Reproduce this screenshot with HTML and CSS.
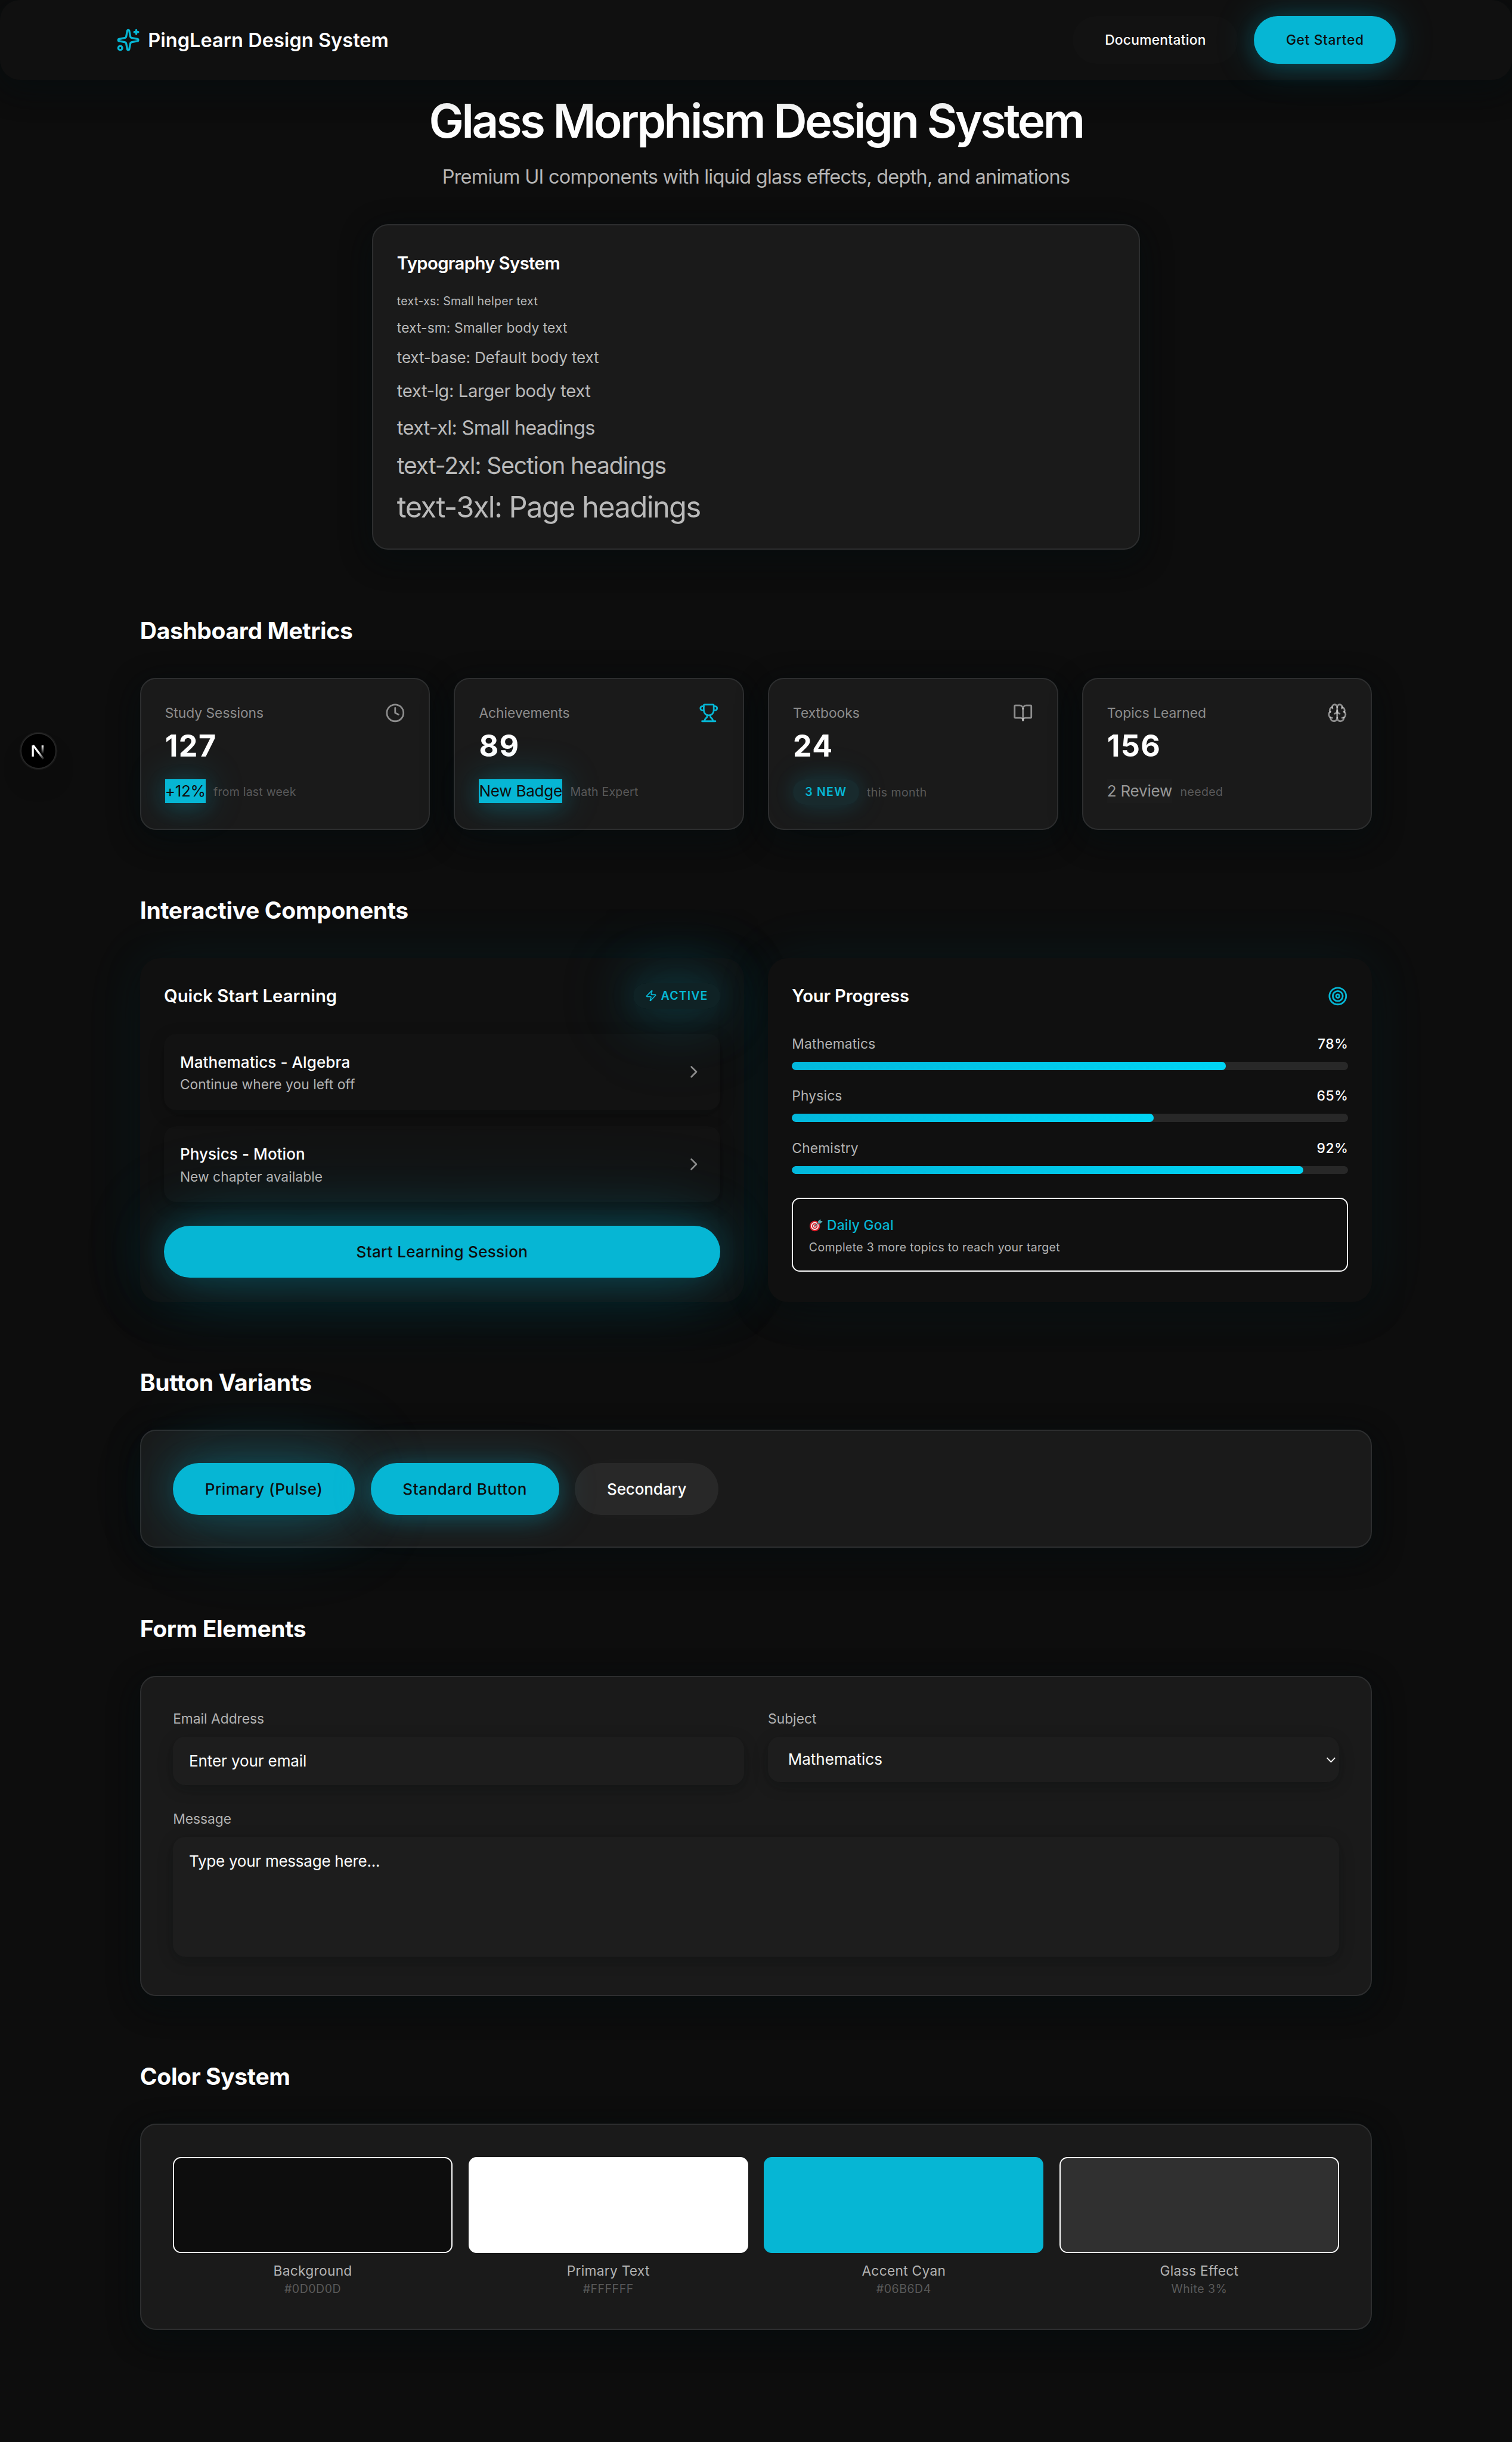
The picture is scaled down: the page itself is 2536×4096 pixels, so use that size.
FILE: index.html
```
<!DOCTYPE html>
<html lang="en">
<head>
<meta charset="utf-8">
<title>PingLearn Design System</title>
<link rel="stylesheet" href="styles.css">
</head>
<body>
<header class="topbar">
  <div class="topbar-inner">
    <div class="brand">
      <svg class="icon icon-lg" viewBox="0 0 24 24"><path d="M11.017 2.814a1 1 0 0 1 1.966 0l1.051 5.558a2 2 0 0 0 1.594 1.594l5.558 1.051a1 1 0 0 1 0 1.966l-5.558 1.051a2 2 0 0 0-1.594 1.594l-1.051 5.558a1 1 0 0 1-1.966 0l-1.051-5.558a2 2 0 0 0-1.594-1.594l-5.558-1.051a1 1 0 0 1 0-1.966l5.558-1.051a2 2 0 0 0 1.594-1.594z"/><path d="M20 2v4"/><path d="M22 4h-4"/><circle cx="4" cy="20" r="2"/></svg>
      <span>PingLearn Design System</span>
    </div>
    <nav class="actions">
      <button class="btn btn-sm btn-ghost">Documentation</button>
      <button class="btn btn-sm btn-primary btn-cta">Get Started</button>
    </nav>
  </div>
</header>

<main class="page">
  <section class="hero">
    <h1>Glass Morphism Design System</h1>
    <p class="lead">Premium UI components with liquid glass effects, depth, and animations</p>
    <div class="card type-card">
      <h2 class="type-title">Typography System</h2>
      <div class="type-list">
        <p class="t-xs">text-xs: Small helper text</p>
        <p class="t-sm">text-sm: Smaller body text</p>
        <p class="t-base">text-base: Default body text</p>
        <p class="t-lg">text-lg: Larger body text</p>
        <p class="t-xl">text-xl: Small headings</p>
        <p class="t-2xl">text-2xl: Section headings</p>
        <p class="t-3xl">text-3xl: Page headings</p>
      </div>
    </div>
  </section>

  <section class="section">
    <h2 class="section-title">Dashboard Metrics</h2>
    <div class="metrics">
      <article class="card metric">
        <div class="metric-head"><span>Study Sessions</span>
          <svg class="icon" viewBox="0 0 24 24"><circle cx="12" cy="12" r="10"/><path d="M12 6v6l4 2"/></svg></div>
        <div class="metric-value">127</div>
        <div class="metric-foot"><span class="tag tag-cyan tag-tight">+12%</span><span class="note">from last week</span></div>
      </article>
      <article class="card metric">
        <div class="metric-head"><span>Achievements</span>
          <svg class="icon cyan" viewBox="0 0 24 24"><path d="M10 14.66v1.626a2 2 0 0 1-.976 1.696A5 5 0 0 0 7 21.978"/><path d="M14 14.66v1.626a2 2 0 0 0 .976 1.696A5 5 0 0 1 17 21.978"/><path d="M18 9h1.5a1 1 0 0 0 0-5H18"/><path d="M4 22h16"/><path d="M6 9a6 6 0 0 0 12 0V3a1 1 0 0 0-1-1H7a1 1 0 0 0-1 1z"/><path d="M6 9H4.5a1 1 0 0 1 0-5H6"/></svg></div>
        <div class="metric-value">89</div>
        <div class="metric-foot"><span class="tag tag-cyan">New Badge</span><span class="note">Math Expert</span></div>
      </article>
      <article class="card metric">
        <div class="metric-head"><span>Textbooks</span>
          <svg class="icon" viewBox="0 0 24 24"><path d="M12 7v14"/><path d="M3 18a1 1 0 0 1-1-1V4a1 1 0 0 1 1-1h5a4 4 0 0 1 4 4 4 4 0 0 1 4-4h5a1 1 0 0 1 1 1v13a1 1 0 0 1-1 1h-6a3 3 0 0 0-3 3 3 3 0 0 0-3-3z"/></svg></div>
        <div class="metric-value">24</div>
        <div class="metric-foot"><span class="pill">3 NEW</span><span class="note note-wide">this month</span></div>
      </article>
      <article class="card metric">
        <div class="metric-head"><span>Topics Learned</span>
          <svg class="icon" viewBox="0 0 24 24"><path d="M12 18V5"/><path d="M15 13a4.17 4.17 0 0 1-3-4 4.17 4.17 0 0 1-3 4"/><path d="M17.598 6.5A3 3 0 1 0 12 5a3 3 0 1 0-5.598 1.5"/><path d="M17.997 5.125a4 4 0 0 1 2.526 5.77"/><path d="M18 18a4 4 0 0 0 2-7.464"/><path d="M19.967 17.483A4 4 0 1 1 12 18a4 4 0 1 1-7.967-.517"/><path d="M6 18a4 4 0 0 1-2-7.464"/><path d="M6.003 5.125a4 4 0 0 0-2.526 5.77"/></svg></div>
        <div class="metric-value">156</div>
        <div class="metric-foot"><span class="tag tag-muted">2 Review</span><span class="note note-wide">needed</span></div>
      </article>
    </div>
  </section>

  <section class="section">
    <h2 class="section-title">Interactive Components</h2>
    <div class="duo">
      <article class="panel">
        <div class="panel-head"><h3>Quick Start Learning</h3>
          <span class="pill pill-live"><svg class="icon icon-xs" viewBox="0 0 24 24"><path d="M4 14a1 1 0 0 1-.78-1.63l9.9-10.2a.5.5 0 0 1 .86.46l-1.92 6.02A1 1 0 0 0 13 10h7a1 1 0 0 1 .78 1.63l-9.9 10.2a.5.5 0 0 1-.86-.46l1.92-6.02A1 1 0 0 0 11 14z"/></svg>ACTIVE</span></div>
        <div class="lessons">
          <a class="lesson"><span class="lesson-text"><b>Mathematics - Algebra</b><small>Continue where you left off</small></span>
            <svg class="icon" viewBox="0 0 24 24"><path d="m9 18 6-6-6-6"/></svg></a>
          <a class="lesson"><span class="lesson-text"><b>Physics - Motion</b><small>New chapter available</small></span>
            <svg class="icon" viewBox="0 0 24 24"><path d="m9 18 6-6-6-6"/></svg></a>
        </div>
        <button class="btn btn-primary btn-pulse btn-block">Start Learning Session</button>
      </article>
      <article class="panel">
        <div class="panel-head"><h3 class="snug">Your Progress</h3>
          <svg class="icon cyan" viewBox="0 0 24 24"><circle cx="12" cy="12" r="10"/><circle cx="12" cy="12" r="6"/><circle cx="12" cy="12" r="2"/></svg></div>
        <div class="progress-list">
          <div class="progress"><div class="progress-head"><span>Mathematics</span><b>78%</b></div><div class="track"><div class="fill" style="width:78%"></div></div></div>
          <div class="progress"><div class="progress-head"><span>Physics</span><b>65%</b></div><div class="track"><div class="fill" style="width:65%"></div></div></div>
          <div class="progress"><div class="progress-head"><span>Chemistry</span><b>92%</b></div><div class="track"><div class="fill" style="width:92%"></div></div></div>
        </div>
        <div class="goal">
          <div class="goal-title">
            <svg class="goal-icon" viewBox="0 0 28 28"><circle cx="11.5" cy="16" r="10.5" fill="#d3202a"/><circle cx="11.5" cy="16" r="7.8" fill="#f3ecec"/><circle cx="11.5" cy="16" r="5.6" fill="#d3202a"/><circle cx="11.5" cy="16" r="3.3" fill="#f3ecec"/><circle cx="11.5" cy="16" r="1.6" fill="#d3202a"/><path d="M11.5 16 21 8" stroke="#4b6a70" stroke-width="1.8"/><path d="M18 6.500 22.500 2l.7 3.800 4 .8-4.700 4.600-4.500-.7z" fill="#56a9b0"/></svg>
            <span>Daily Goal</span></div>
          <p>Complete 3 more topics to reach your target</p>
        </div>
      </article>
    </div>
  </section>

  <section class="section">
    <h2 class="section-title">Button Variants</h2>
    <div class="card roomy buttons">
      <button class="btn btn-primary btn-pulse">Primary (Pulse)</button>
      <button class="btn btn-primary btn-standard">Standard Button</button>
      <button class="btn btn-secondary">Secondary</button>
    </div>
  </section>

  <section class="section">
    <h2 class="section-title">Form Elements</h2>
    <form class="card roomy form">
      <label class="field"><span>Email Address</span><input class="control" type="text" placeholder="Enter your email"></label>
      <label class="field"><span>Subject</span>
        <span class="select-wrap"><select class="control"><option>Mathematics</option></select>
        <svg class="caret" viewBox="0 0 10 6"><path d="M1 .8 5 5 9 .8"/></svg></span></label>
      <label class="field wide"><span>Message</span><textarea class="control message" placeholder="Type your message here..."></textarea></label>
    </form>
  </section>

  <section class="section">
    <h2 class="section-title">Color System</h2>
    <div class="card roomy swatches">
      <div class="swatch"><div class="chip chip-bg"></div><p>Background</p><small>#0D0D0D</small></div>
      <div class="swatch"><div class="chip chip-white"></div><p>Primary Text</p><small>#FFFFFF</small></div>
      <div class="swatch"><div class="chip chip-cyan"></div><p>Accent Cyan</p><small>#06B6D4</small></div>
      <div class="swatch"><div class="chip chip-glass"></div><p>Glass Effect</p><small>White 3%</small></div>
    </div>
  </section>
</main>

<div class="dev-badge">
  <svg viewBox="0 0 34 34">
    <defs>
      <linearGradient id="diag" gradientUnits="userSpaceOnUse" x1="17" y1="18.500" x2="22.500" y2="26"><stop offset="0" stop-color="#fff"/><stop offset="1" stop-color="#fff" stop-opacity="0"/></linearGradient>
      <linearGradient id="stem" gradientUnits="userSpaceOnUse" x1="0" y1="11.500" x2="0" y2="20"><stop offset="0" stop-color="#fff"/><stop offset="1" stop-color="#fff" stop-opacity="0"/></linearGradient>
    </defs>
    <path d="M11.400 22.700V11.500" stroke="#fff" stroke-width="2"/>
    <path d="M11.700 11.500 22 25" stroke="url(#diag)" stroke-width="2"/>
    <rect x="20.100" y="11.500" width="2" height="8.500" fill="url(#stem)"/>
  </svg>
</div>
</body>
</html>
```
FILE: styles.css
```
/* 1rem is ten layout pixels at the display scale */
html { font-size: 16.7725px; background: #0d0d0d; }
* { box-sizing: border-box; margin: 0; padding: 0; }
body {
  position: relative;
  height: 244.2rem;
  overflow: hidden;
  background: #0d0d0d;
  color: #fff;
  font-family: Inter, "Liberation Sans", sans-serif;
  font-size: 1.552rem;
  line-height: 2.4rem;
}
button, input, select, textarea { font: inherit; color: inherit; border: 0; background: none; letter-spacing: inherit; }

.icon { width: 2rem; height: 2rem; flex: none; fill: none; stroke: currentColor; stroke-width: 2; stroke-linecap: round; stroke-linejoin: round; }
.icon-lg { width: 2.4rem; height: 2.4rem; color: #06b6d4; }
.icon-xs { width: 1.2rem; height: 1.2rem; }
.cyan { color: #06b6d4 !important; }

/* top bar */
.topbar {
  position: relative;
  z-index: 2;
  height: 8rem;
  border-radius: 2rem;
  background: #101010;
  box-shadow: 0 .8rem 3.2rem rgba(0,0,0,.46), 0 .8rem 3.2rem rgba(6,182,212,.05);
}
.topbar-inner { width: 128rem; height: 100%; margin: 0 auto; display: flex; align-items: center; justify-content: space-between; }
.brand { display: flex; align-items: center; gap: .8rem; font-size: 1.94rem; font-weight: 600; letter-spacing: .001em; }
.actions { display: flex; gap: 1.6rem; }

/* buttons */
.btn { height: 5.2rem; padding: 1px 3.2rem 0; border-radius: 2.6rem; font-weight: 500; white-space: nowrap; letter-spacing: .016em; }
.btn-sm { height: 4.8rem; border-radius: 2.4rem; font-size: 1.358rem; letter-spacing: .012em; }
.btn-primary { background: #06b6d4; color: #0d0d0d; box-shadow: 0 .4rem 2rem rgba(6,182,212,.2), 0 0 4rem rgba(6,182,212,.26); }
.btn-cta { letter-spacing: .028em; }
.btn-standard { letter-spacing: .0205em; }
.btn-pulse { box-shadow: 0 0 3rem rgba(6,182,212,.16), 0 0 6rem rgba(6,182,212,.22), 0 0 10rem rgba(6,182,212,.2); }
.btn-ghost { background: rgba(255,255,255,.012); box-shadow: 0 0 3.2rem rgba(255,255,255,.014); }
.btn-secondary { background: rgba(255,255,255,.064); box-shadow: 0 0 3.2rem rgba(255,255,255,.02); letter-spacing: -.0057em; }
.btn-block { display: block; width: 100%; letter-spacing: .011em; }

/* hero */
.page { width: 123.2rem; margin: 0 auto; }
.hero { padding-top: 1.2rem; text-align: center; }
h1 { font-size: 4.656rem; line-height: 5.8rem; font-weight: 600; letter-spacing: -.045em; }
.lead { margin-top: 1.3rem; font-size: 1.94rem; line-height: 2.8rem; letter-spacing: -.0234em; color: #b5b5b5; }

.card {
  border: 2px solid #2d2e2f;
  border-radius: 1.6rem;
  background: #1a1a1a;
  box-shadow: 0 .8rem 3.2rem rgba(0,0,0,.46), 0 .8rem 3.2rem rgba(6,182,212,.05);
}
.roomy { padding: calc(3.3rem - 2px); }
.type-card { width: 76.8rem; height: 32.6rem; margin: 3.3rem auto 0; padding: calc(2.5rem - 1px) calc(2.5rem - 2px) 0; text-align: left; }
.type-title { font-size: 1.746rem; line-height: 2.8rem; font-weight: 600; letter-spacing: -.021em; }
.type-list { margin-top: 1.6rem; display: flex; flex-direction: column; gap: .8rem; color: #bababa; }
.t-xs { font-size: 1.164rem; line-height: 1.6rem; letter-spacing: .015em; }
.t-sm { font-size: 1.358rem; line-height: 2rem; letter-spacing: .0045em; }
.t-base { font-size: 1.552rem; line-height: 2.4rem; letter-spacing: -.0065em; }
.t-lg { font-size: 1.746rem; line-height: 2.8rem; letter-spacing: -.013em; }
.t-xl { font-size: 1.94rem; line-height: 2.8rem; letter-spacing: -.0225em; }
.t-2xl { font-size: 2.328rem; line-height: 3.2rem; letter-spacing: -.029em; }
.t-3xl { font-size: 2.91rem; line-height: 3.6rem; letter-spacing: -.033em; }

.section { padding-top: calc(6.4rem + 1px); }
.section-title { margin-bottom: calc(3.2rem - 1px); font-size: 2.328rem; line-height: 3.2rem; font-weight: 700; letter-spacing: -.0095em; }

/* metrics */
.metrics { display: grid; grid-template-columns: repeat(4, 1fr); gap: 2.4rem; }
.metric { height: 15.2rem; padding: calc(2.5rem - 2px); }
.metric-head { display: flex; justify-content: space-between; font-size: 1.358rem; line-height: 2rem; color: rgba(255,255,255,.5); }
.metric-value { margin-top: .5rem; font-size: 3rem; line-height: 3.6rem; font-weight: 700; letter-spacing: .028em; }
.metric-foot { display: flex; align-items: center; gap: .8rem; margin-top: 1.5rem; }
.tag { letter-spacing: -.0085em; }
.tag-cyan { background: #06b6d4; color: #0d0d0d; box-shadow: 0 .4rem 2rem rgba(6,182,212,.2), 0 0 4rem rgba(6,182,212,.28); }
.tag-tight { letter-spacing: -.012em; }
.tag-muted { background: rgba(255,255,255,.012); color: #989898; }
.note { padding-top: 1px; font-size: 1.164rem; letter-spacing: .011em; color: #595959; }
.note-wide { letter-spacing: .021em; }
.pill {
  display: flex; align-items: center; gap: .4rem;
  height: 2.6rem; padding: 0 1.2rem; border-radius: 1.3rem;
  background: rgba(6,182,212,.1); color: #06b6d4;
  box-shadow: 0 0 2rem rgba(6,182,212,.15), 0 0 4rem rgba(6,182,212,.1);
  font-size: 1.164rem; font-weight: 600; letter-spacing: .065em;
}
.pill-live { background: rgba(6,182,212,.11); letter-spacing: .058em; box-shadow: 0 0 3rem rgba(6,182,212,.1), 0 0 6rem rgba(6,182,212,.28), 0 0 9rem rgba(6,182,212,.26); }

/* panels */
.duo { display: grid; grid-template-columns: 1fr 1fr; gap: 2.4rem; }
.panel {
  height: 34.4rem; padding: 2.4rem; border-radius: 2rem; background: #101010;
  box-shadow: 0 .8rem 3.2rem rgba(0,0,0,.38), 0 0 6rem rgba(6,182,212,.09);
}
.panel-head { height: 2.8rem; display: flex; align-items: center; justify-content: space-between; }
h3 { padding-top: 1px; font-size: 1.746rem; line-height: 2.8rem; font-weight: 600; }
.snug { letter-spacing: -.007em; }
.lessons { display: flex; flex-direction: column; gap: 1.6rem; margin: 2.4rem 0; }
.lesson {
  display: flex; align-items: center; justify-content: space-between;
  height: 7.6rem; padding: 1.6rem; border-radius: 1.2rem;
  background: rgba(255,255,255,.012); color: #8c8c8c;
  box-shadow: 0 .4rem 1.6rem rgba(0,0,0,.18), 0 .4rem 1.6rem rgba(6,182,212,.012);
}
.lesson-text { display: flex; flex-direction: column; padding-top: 2px; }
.lesson b { font-weight: 500; color: #fff; letter-spacing: .003em; }
.lesson small { font-size: 1.358rem; line-height: 2rem; color: #b3b3b3; letter-spacing: .002em; }
.progress-list { display: flex; flex-direction: column; gap: 1.6rem; margin: 2.4rem 0; }
.progress-head { display: flex; justify-content: space-between; font-size: 1.358rem; line-height: 2rem; letter-spacing: .007em; color: #b3b3b3; }
.progress-head b { font-weight: 500; color: #fff; letter-spacing: .03em; margin-right: -.03em; }
.track { height: .8rem; margin-top: .8rem; border-radius: .4rem; background: #282828; overflow: hidden; }
.fill { height: 100%; border-radius: .4rem; background: linear-gradient(135deg, #02b8dc, #00d5f5); }
.goal { height: 7.4rem; padding: calc(1.7rem - 2px); border: 2px solid #fff; border-radius: .8rem; }
.goal-title { display: flex; align-items: center; gap: .4rem; font-size: 1.358rem; line-height: 2rem; font-weight: 500; letter-spacing: .009em; color: #06b6d4; }
.goal-icon { width: 1.4rem; height: 1.4rem; }
.goal p { margin-top: calc(.4rem + 1px); font-size: 1.164rem; line-height: 1.6rem; letter-spacing: .0157em; color: #b3b3b3; }

.buttons { display: flex; gap: 1.6rem; }

/* form */
.form { height: 32rem; display: grid; grid-template-columns: 1fr 1fr; gap: 2.4rem; align-content: start; align-items: start; }
.field { display: block; font-size: 1.358rem; line-height: 2rem; color: #b3b3b3; }
.field > span:first-child { display: block; margin-bottom: .8rem; }
.wide { grid-column: 1 / -1; }
.control {
  display: block; width: 100%; height: 4.8rem; padding: 1.2rem 1.6rem; border-radius: 1.2rem; outline: 0;
  background: #1d1d1d; color: #fff; font-size: 1.552rem; line-height: 2.4rem; letter-spacing: -.004em;
  box-shadow: 0 .4rem 1.6rem rgba(0,0,0,.2), 0 .4rem 1.6rem rgba(6,182,212,.016);
}
.control::placeholder { color: #fff; opacity: 1; }
.select-wrap { position: relative; display: block; }
select.control { appearance: none; height: 4.5rem; padding: 1px 2rem 0; letter-spacing: .001em; }
.caret { position: absolute; right: .3rem; top: 2rem; width: 1rem; height: .6rem; fill: none; stroke: #fff; stroke-width: 1.1; }
.message { height: 12rem; padding-top: calc(1.2rem + 1px); resize: none; letter-spacing: -.0096em; }

/* palette */
.swatches { display: grid; grid-template-columns: repeat(4, 1fr); gap: 1.6rem; text-align: center; }
.chip { height: 9.6rem; border: 2px solid #fff; border-radius: .8rem; }
.chip-bg { background: #0d0d0d; }
.chip-white { background: #fff; }
.chip-cyan { background: #06b6d4; border-color: #06b6d4; }
.chip-glass { background: #303030; }
.swatch p { margin-top: .8rem; font-size: 1.358rem; line-height: 2rem; letter-spacing: .012em; color: #b3b3b3; }
.swatch small { display: block; font-size: 1.164rem; line-height: 1.6rem; letter-spacing: .026em; color: #595959; }

.dev-badge {
  position: absolute; z-index: 3; left: 2.12rem; top: 73.4rem; width: 3.4rem; height: 3.4rem; border-radius: 50%;
  background: #000; box-shadow: 0 0 0 .1rem #282828, 0 0 0 .2rem #191919, 0 1.6rem 3.2rem -.8rem rgba(0,0,0,.24);
}
.dev-badge svg { display: block; width: 100%; height: 100%; }
```
